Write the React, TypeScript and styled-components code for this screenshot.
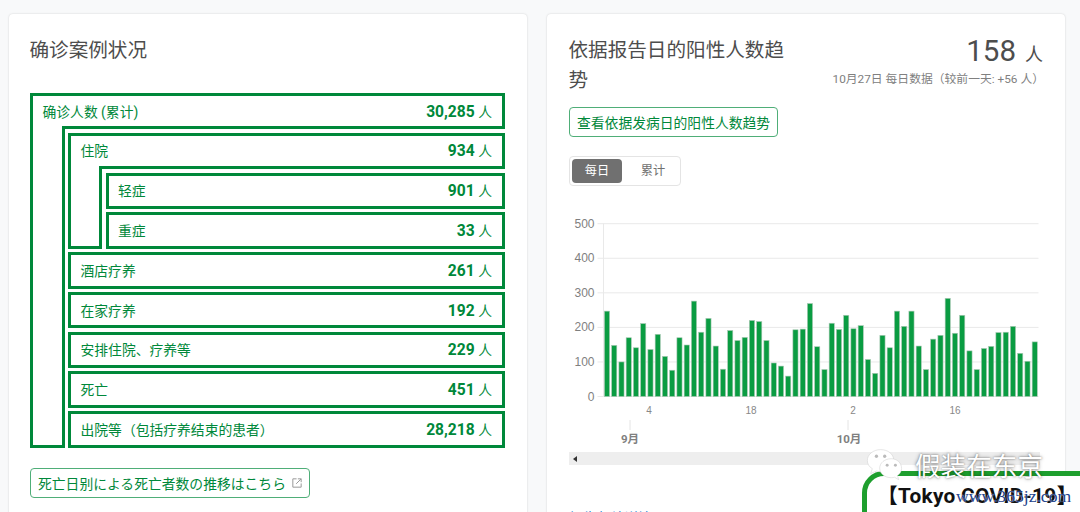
import React from 'react';
import styled, { createGlobalStyle } from 'styled-components';

const FONT = `Roboto, "Noto Sans CJK SC", "Noto Sans", sans-serif`;
const GREEN = '#00883a';

const Global = createGlobalStyle`
  html, body { margin: 0; height: 512px; overflow: hidden; background: #f8f9fa; font-family: ${FONT}; }
`;

const Page = styled.main`
  display: grid;
  grid-template-columns: 518px 518px;
  column-gap: 20px;
  padding: 14px 0 0 9px;
  width: 1080px;
  height: 512px;
  box-sizing: border-box;
  position: relative;
  overflow: hidden;
`;

const Card = styled.section<{ $left: number }>`
  background: #fff;
  border-radius: 4px;
  box-shadow: 0 0 2px rgba(0, 0, 0, 0.18);
  padding: 22px 22px 0 ${p => p.$left}px;
  height: 560px;
  box-sizing: border-box;
`;

const Title = styled.h3`
  margin: 0 0 0 -0.5px;
  font-size: 19.6px;
  line-height: 30px;
  font-weight: 400;
  color: #4d4d4d;
`;

const Tree = styled.div`
  margin-top: 27px;
  width: 475px;
`;

const Group = styled.div<{ $rail: number }>`
  display: grid;
  grid-template-columns: ${p => p.$rail}px 1fr;
`;

const GroupHead = styled.div<{ $rail: number }>`
  grid-column: 1 / 3;
  height: 36.4px;
  box-sizing: border-box;
  display: flex;
  align-items: center;
  justify-content: space-between;
  padding: 0 10px 4px 9.5px;
  border: 3px solid ${GREEN};
  border-bottom: 0;
  background: linear-gradient(${GREEN}, ${GREEN}) no-repeat right bottom / calc(100% - ${p => p.$rail - 6}px) 3px;
`;

const Rail = styled.div`
  border: 3px solid ${GREEN};
  border-top: 0;
`;

const Children = styled.div`
  display: flex;
  flex-direction: column;
  gap: 3.4px;
  padding: 3.4px 0 0 3.5px;
`;

const Row = styled.div`
  height: 36.4px;
  box-sizing: border-box;
  display: flex;
  align-items: center;
  justify-content: space-between;
  padding: 0 10px 1px 9.5px;
  border: 3px solid ${GREEN};
`;

const Label = styled.span`
  font-size: 13.8px;
  color: ${GREEN};
`;

const Value = styled.span`
  font-size: 13.8px;
  color: ${GREEN};
  strong { font-size: 15.6px; font-weight: 700; margin-right: 3.5px; }
`;

const OutlineLink = styled.a<{ $top: number; $gap: number }>`
  display: inline-flex;
  align-items: center;
  gap: ${p => p.$gap}px;
  height: 30px;
  box-sizing: border-box;
  margin-top: ${p => p.$top}px;
  padding: 0 7px;
  border: 1px solid #4fae78;
  border-radius: 4px;
  font-size: 13.8px;
  color: ${GREEN};
  white-space: nowrap;
`;

const HeaderRow = styled.div`
  display: flex;
  justify-content: space-between;
`;

const TitleWrap = styled.div`
  width: 222px;
`;

const Stat = styled.div`
  display: flex;
  flex-direction: column;
  align-items: flex-end;
  color: #4d4d4d;
`;

const Big = styled.div`
  font-size: 29.5px;
  line-height: 32px;
  margin-top: -1px;
  span { font-size: 18px; margin-left: 9px; }
`;

const Sub = styled.div`
  font-size: 11.8px;
  color: #808080;
  line-height: 16px;
  margin-right: -1px;
`;

const Toggle = styled.div`
  display: flex;
  width: 112px;
  height: 30px;
  box-sizing: border-box;
  margin-top: 19px;
  padding: 2px;
  border: 1px solid #e4e4e4;
  border-radius: 4px;
`;

const ToggleItem = styled.div<{ $on?: boolean }>`
  flex: none;
  width: ${p => (p.$on ? 50 : 56)}px;
  margin-left: ${p => (p.$on ? 0 : 3)}px;
  text-align: center;
  border-radius: 4px;
  font-size: 12.2px;
  line-height: 25px;
  height: 24px;
  background: ${p => (p.$on ? '#707070' : 'transparent')};
  color: ${p => (p.$on ? '#fff' : '#707070')};
`;

const ChartSvg = styled.svg`
  display: block;
  margin-top: 27px;
  margin-left: -22px;
`;

const ScrollBar = styled.div`
  width: 471px;
  height: 13px;
  background: #eeeeee;
  display: flex;
  align-items: center;
  padding-left: 4px;
  box-sizing: border-box;
`;

const ScrollArrow = styled.i`
  width: 0;
  height: 0;
  border: 3px solid transparent;
  border-left: 0;
  border-right: 4px solid #333;
`;

const SourceLink = styled.div`
  display: flex;
  align-items: center;
  gap: 5px;
  margin-top: 42px;
  font-size: 13.8px;
  color: #1a7fd4;
`;

const Watermark = styled.div`
  position: absolute;
  left: 866px;
  top: 445px;
  display: flex;
  align-items: center;
  gap: 10px;
  z-index: 3;
`;

const WatermarkText = styled.span`
  margin-top: 2px;
  font-size: 25.6px;
  line-height: 36px;
  color: #fff;
  text-shadow: 0 0 2px rgba(0, 0, 0, 0.5), 0 0 4px rgba(0, 0, 0, 0.3);
  font-family: "Noto Sans CJK TC", sans-serif;
  font-weight: 400;
`;

const Promo = styled.div`
  position: absolute;
  left: 862px;
  top: 471px;
  width: 260px;
  height: 80px;
  box-sizing: border-box;
  border: 5px solid #1e9f2e;
  border-radius: 22px;
  background: #fff;
  z-index: 2;
  padding: 8px 0 0 10px;
  font-size: 20.8px;
  font-weight: 700;
  line-height: 24px;
  color: #111;
  white-space: nowrap;
  letter-spacing: 0.3px;
`;

const SiteStamp = styled.div`
  position: absolute;
  left: 956px;
  top: 484px;
  z-index: 4;
  font-family: "Liberation Serif", serif;
  font-size: 17.6px;
  line-height: 24px;
  color: #1c3f8c;
  text-shadow: 0 0 1px #fff;
`;

const data = [247,148,100,170,141,211,136,180,116,76,170,149,276,186,226,146,79,191,162,171,220,217,162,97,88,59,193,195,269,144,78,212,194,235,196,205,107,67,177,141,247,203,247,146,78,166,177,284,183,235,132,78,139,145,185,186,203,125,102,158];

const Chart = () => {
  const x0 = 603.5 - 547;
  const x1 = 1038.5 - 547;
  const y0 = 183.5;
  const pitch = (x1 - x0) / data.length;
  const ticks = [0, 100, 200, 300, 400, 500];
  return (
    <ChartSvg width="518" height="239" viewBox="0 0 518 239">
      {ticks.map(t => {
        const y = y0 - t * 0.3456;
        return (
          <g key={t}>
            <line x1={x0 - 6} x2={x1} y1={y} y2={y} stroke="#e9e9e9" strokeWidth="1" />
            <text x={x0 - 9} y={y + 4} textAnchor="end" fontSize="12" fontFamily="Liberation Sans" fill="#7f7f7f">{t}</text>
          </g>
        );
      })}
      <line x1={x0} x2={x0} y1={y0 - 172.8} y2={y0} stroke="#e9e9e9" />
      {data.map((v, i) => (
        <rect key={i} x={x0 + i * pitch + 0.9} y={y0 - v * 0.3456} width={pitch - 2.1} height={v * 0.3456}
          fill="#0a9c42" stroke="#a9c9b4" strokeWidth="0.6" />
      ))}
      {[['4', 102], ['18', 204], ['2', 306], ['16', 408]].map(([t, x]) => (
        <text key={String(t)} x={x} y={201} textAnchor="middle" fontSize="10" fontFamily="Liberation Sans" fill="#888">{t}</text>
      ))}
      <line x1="83" x2="83" y1="207" y2="217" stroke="#e4e4e4" />
      <line x1="301" x2="301" y1="207" y2="217" stroke="#e4e4e4" />
      <text x="83" y="230" textAnchor="middle" fontSize="11.5" fontWeight="700" fontFamily={FONT} fill="#808080">9月</text>
      <text x="302" y="230" textAnchor="middle" fontSize="11.5" fontWeight="700" fontFamily={FONT} fill="#808080">10月</text>
    </ChartSvg>
  );
};

const Val = ({ n }: { n: string }) => <Value><strong>{n}</strong>人</Value>;

const ExternalIcon = () => (
  <svg width="10" height="10" viewBox="0 0 24 24" fill="none" stroke="#9a9a9a" strokeWidth="2.4">
    <path d="M11 2H2v20h20v-9" />
    <path d="M14 2h8v8M22 2 10 14" />
  </svg>
);

const WeChat = () => (
  <svg width="39" height="33" viewBox="0 0 46 40">
    <path d="M17 2C8 2 1 8 1 15c0 4 2 8 6 10l-2 6 7-3c2 .5 3 .7 5 .7 9 0 16-6 16-13.700S26 2 17 2Z" fill="#fff" stroke="#ccc" strokeWidth=".6" />
    <path d="M30 13c-8 0-14 5-14 11.500S22 36 30 36c1.500 0 3-.2 4-.6l5 3-1.500-5c3-2 5-5 5-8.500C42.500 18 37 13 30 13Z" fill="#fff" stroke="#ccc" strokeWidth=".6" />
    <circle cx="12" cy="10" r="2" fill="#bbb" />
    <circle cx="22" cy="10" r="2" fill="#bbb" />
    <circle cx="25" cy="21" r="1.800" fill="#bbb" />
    <circle cx="35" cy="21" r="1.800" fill="#bbb" />
  </svg>
);

const subRows = [
  ['酒店疗养', '261'],
  ['在家疗养', '192'],
  ['安排住院、疗养等', '229'],
  ['死亡', '451'],
  ['出院等（包括疗养结束的患者）', '28,218'],
];

export default function App() {
  return (
    <Page>
      <Global />
      <Card $left={21}>
        <Title>确诊案例状况</Title>
        <Tree>
          <Group $rail={34.5}>
            <GroupHead $rail={34.5}><Label>确诊人数 (累计)</Label><Val n="30,285" /></GroupHead>
            <Rail />
            <Children>
              <Group $rail={34}>
                <GroupHead $rail={34}><Label>住院</Label><Val n="934" /></GroupHead>
                <Rail />
                <Children>
                  <Row><Label>轻症</Label><Val n="901" /></Row>
                  <Row><Label>重症</Label><Val n="33" /></Row>
                </Children>
              </Group>
              {subRows.map(([l, v]) => (
                <Row key={l}><Label>{l}</Label><Val n={v} /></Row>
              ))}
            </Children>
          </Group>
        </Tree>
        <OutlineLink $top={20} $gap={6}>死亡日别による死亡者数の推移はこちら <ExternalIcon /></OutlineLink>
      </Card>
      <Card $left={22}>
        <HeaderRow>
          <TitleWrap><Title>依据报告日的阳性人数趋势</Title></TitleWrap>
          <Stat>
            <Big>158<span>人</span></Big>
            <Sub>10月27日 每日数据（较前一天: +56 人）</Sub>
          </Stat>
        </HeaderRow>
        <OutlineLink $top={11} $gap={5}>查看依据发病日的阳性人数趋势</OutlineLink>
        <Toggle>
          <ToggleItem $on>每日</ToggleItem>
          <ToggleItem>累计</ToggleItem>
        </Toggle>
        <Chart />
        <ScrollBar><ScrollArrow /></ScrollBar>
        <SourceLink>报告归纳详情 <ExternalIcon /></SourceLink>
      </Card>
      <Promo>【Tokyo COVID-19】</Promo>
      <Watermark><WeChat /><WatermarkText>假装在东京</WatermarkText></Watermark>
      <SiteStamp>www.365jz.com</SiteStamp>
    </Page>
  );
}
